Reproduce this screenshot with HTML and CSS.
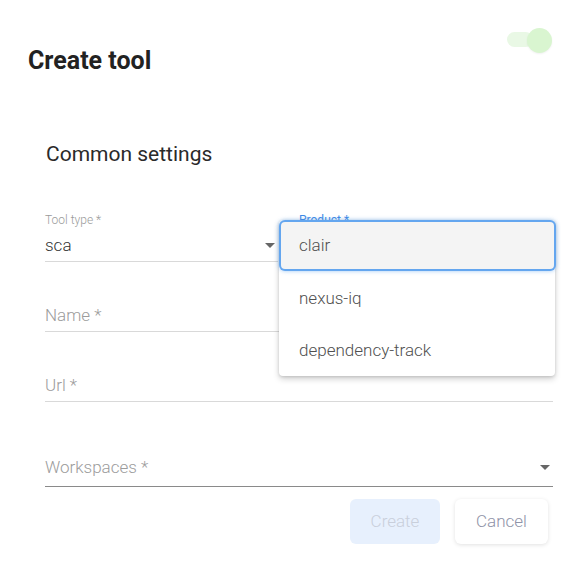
FILE: index.html
```html
<!DOCTYPE html>
<html>
<head>
<meta charset="utf-8">
<link rel="stylesheet" href="styles.css">
</head>
<body>
<div class="dialog">
  <div class="header">
    <h1 class="title">Create tool</h1>
    <div class="switch"><span class="track"></span><span class="thumb"></span></div>
  </div>
  <div class="content">
    <h2 class="section">Common settings</h2>
    <div class="row">
      <div class="field col-left">
        <div class="label">Tool type *</div>
        <div class="input">
          <span class="value">sca</span>
          <span class="arrow"></span>
        </div>
      </div>
      <div class="field col-right">
        <div class="label label-focus">Product *</div>
        <div class="input input-focus"></div>
      </div>
    </div>
    <div class="field plain">
      <div class="input"><span class="placeholder">Name *</span></div>
    </div>
    <div class="field plain">
      <div class="input"><span class="placeholder">Url *</span></div>
    </div>
    <div class="field plain tall">
      <div class="input input-dark">
        <span class="placeholder">Workspaces *</span>
        <span class="arrow"></span>
      </div>
    </div>
    <div class="actions">
      <button class="btn btn-primary">Create</button>
      <button class="btn btn-secondary">Cancel</button>
    </div>
  </div>
  <ul class="menu">
    <li class="item item-active">clair</li>
    <li class="item">nexus-iq</li>
    <li class="item">dependency-track</li>
  </ul>
</div>
</body>
</html>
```

FILE: styles.css
```css
* { box-sizing: border-box; }
html, body {
  margin: 0;
  padding: 0;
  background: #ffffff;
  font-family: Roboto, "Liberation Sans", sans-serif;
}
.dialog {
  position: relative;
  width: 579px;
  height: 563px;
}
.header {
  display: flex;
  justify-content: space-between;
  align-items: flex-start;
  padding: 0 26px 0 28px;
}
.title {
  margin: 47px 0 0 0;
  font-size: 25px;
  line-height: 28px;
  font-weight: 700;
  color: #222222;
}
.switch {
  position: relative;
  width: 46px;
  height: 26px;
  margin-top: 29px;
}
.track {
  position: absolute;
  left: 0;
  top: 3px;
  width: 26px;
  height: 15px;
  border-radius: 8px;
  background: #e9f8e5;
}
.thumb {
  position: absolute;
  left: 20px;
  top: -1px;
  width: 25px;
  height: 25px;
  border-radius: 50%;
  background: #d9f5d0;
  box-shadow: 0 1px 2px rgba(0,0,0,0.06);
}
.content {
  padding: 0 26px 0 45px;
}
.section {
  margin: 67px 0 0 1px;
  font-size: 21px;
  line-height: 25px;
  font-weight: 400;
  color: #2a2a2a;
}
.row {
  display: flex;
  gap: 21px;
  margin-top: 46px;
}
.col-left { width: 233px; }
.col-right { flex: 1; }
.label {
  font-size: 12px;
  line-height: 14px;
  font-weight: 300;
  color: #9a9a9a;
}
.label-focus { color: #3d8ae6; font-weight: 400; }
.input {
  position: relative;
  height: 35px;
  padding: 8px 0 6px 0;
  font-size: 17px;
  line-height: 20px;
  border-bottom: 1px solid #d9d9d9;
  display: flex;
  align-items: center;
  justify-content: space-between;
}
.value { color: #333333; font-weight: 300; }
.placeholder { color: #9c9c9c; font-weight: 300; }
.arrow {
  width: 0;
  height: 0;
  border-left: 5px solid transparent;
  border-right: 5px solid transparent;
  border-top: 5px solid #666666;
  margin-right: 3px;
}
.plain {
  height: 70px;
  display: flex;
  flex-direction: column;
  justify-content: flex-end;
}
.plain .input { padding: 0 0 6px 0; height: 27px; }
.tall { height: 85px; }
.tall .input { padding: 0 0 9px 0; height: 30px; }
.input-dark { border-bottom-color: #8a8a8a; }
.actions {
  display: flex;
  justify-content: flex-end;
  gap: 15px;
  margin-top: 12px;
  padding-right: 5px;
}
.btn {
  height: 45px;
  border: none;
  border-radius: 6px;
  font-family: Roboto, "Liberation Sans", sans-serif;
  font-size: 17px;
  font-weight: 300;
  padding-bottom: 2px;
}
.btn-primary {
  width: 90px;
  background: #e7f0fd;
  color: #c9cfdb;
}
.btn-secondary {
  width: 93px;
  background: #ffffff;
  color: #8f93a8;
  box-shadow: 0 1px 4px rgba(0,0,0,0.12);
}
.menu {
  position: absolute;
  left: 279px;
  top: 220px;
  width: 276px;
  margin: 0;
  padding: 0;
  list-style: none;
  background: #ffffff;
  border-radius: 4px;
  box-shadow: 0 3px 6px rgba(0,0,0,0.18), 0 1px 3px rgba(0,0,0,0.12);
}
.item {
  height: 52px;
  padding: 0 20px;
  display: flex;
  align-items: center;
  font-size: 17px;
  font-weight: 300;
  color: #505050;
}
.item-active {
  height: 47px;
  margin: 2px 1px 3px 2px;
  padding-left: 18px;
  padding-bottom: 1px;
  background: #f4f4f4;
  border-radius: 4px;
  box-shadow: 0 0 0 2px #64a6ef, 0 0 4px 2px rgba(100,166,239,0.6);
}
```
